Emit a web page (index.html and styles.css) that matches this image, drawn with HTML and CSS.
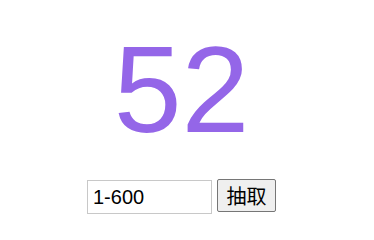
FILE: index.html
```html
<!DOCTYPE html>
<html>
<head>
<meta charset="utf-8">
<link rel="stylesheet" href="styles.css">
</head>
<body>
<div class="page">
  <div class="number">52</div>
  <div class="controls">
    <input class="range" type="text" value="1-600">
    <button class="draw">抽取</button>
  </div>
</div>
</body>
</html>
```
FILE: styles.css
```css
html, body {
  margin: 0;
  padding: 0;
  background: #fff;
}
.page {
  width: 363px;
  text-align: center;
  font-family: "Liberation Sans", Arial, "Noto Sans CJK SC", sans-serif;
}
.number {
  font-size: 122px;
  line-height: 138px;
  color: #9466e8;
  margin-top: 21px;
}
.controls {
  margin-top: 20px;
  display: flex;
  justify-content: center;
  align-items: flex-start;
  gap: 5px;
}
.range {
  box-sizing: border-box;
  width: 125px;
  height: 34px;
  margin: 1px 0 0 0;
  padding: 0 5px;
  border: 1px solid #c8c8c8;
  font-family: "Liberation Sans", Arial, sans-serif;
  font-size: 20px;
  color: #000;
  outline: none;
}
.draw {
  box-sizing: border-box;
  width: 59px;
  height: 33px;
  margin: 0;
  padding: 0 4px;
  border: 1px solid #767676;
  border-radius: 2px;
  background: #efefef;
  font-family: "Noto Sans CJK SC", "Liberation Sans", sans-serif;
  font-size: 20px;
  color: #000;
}
```
